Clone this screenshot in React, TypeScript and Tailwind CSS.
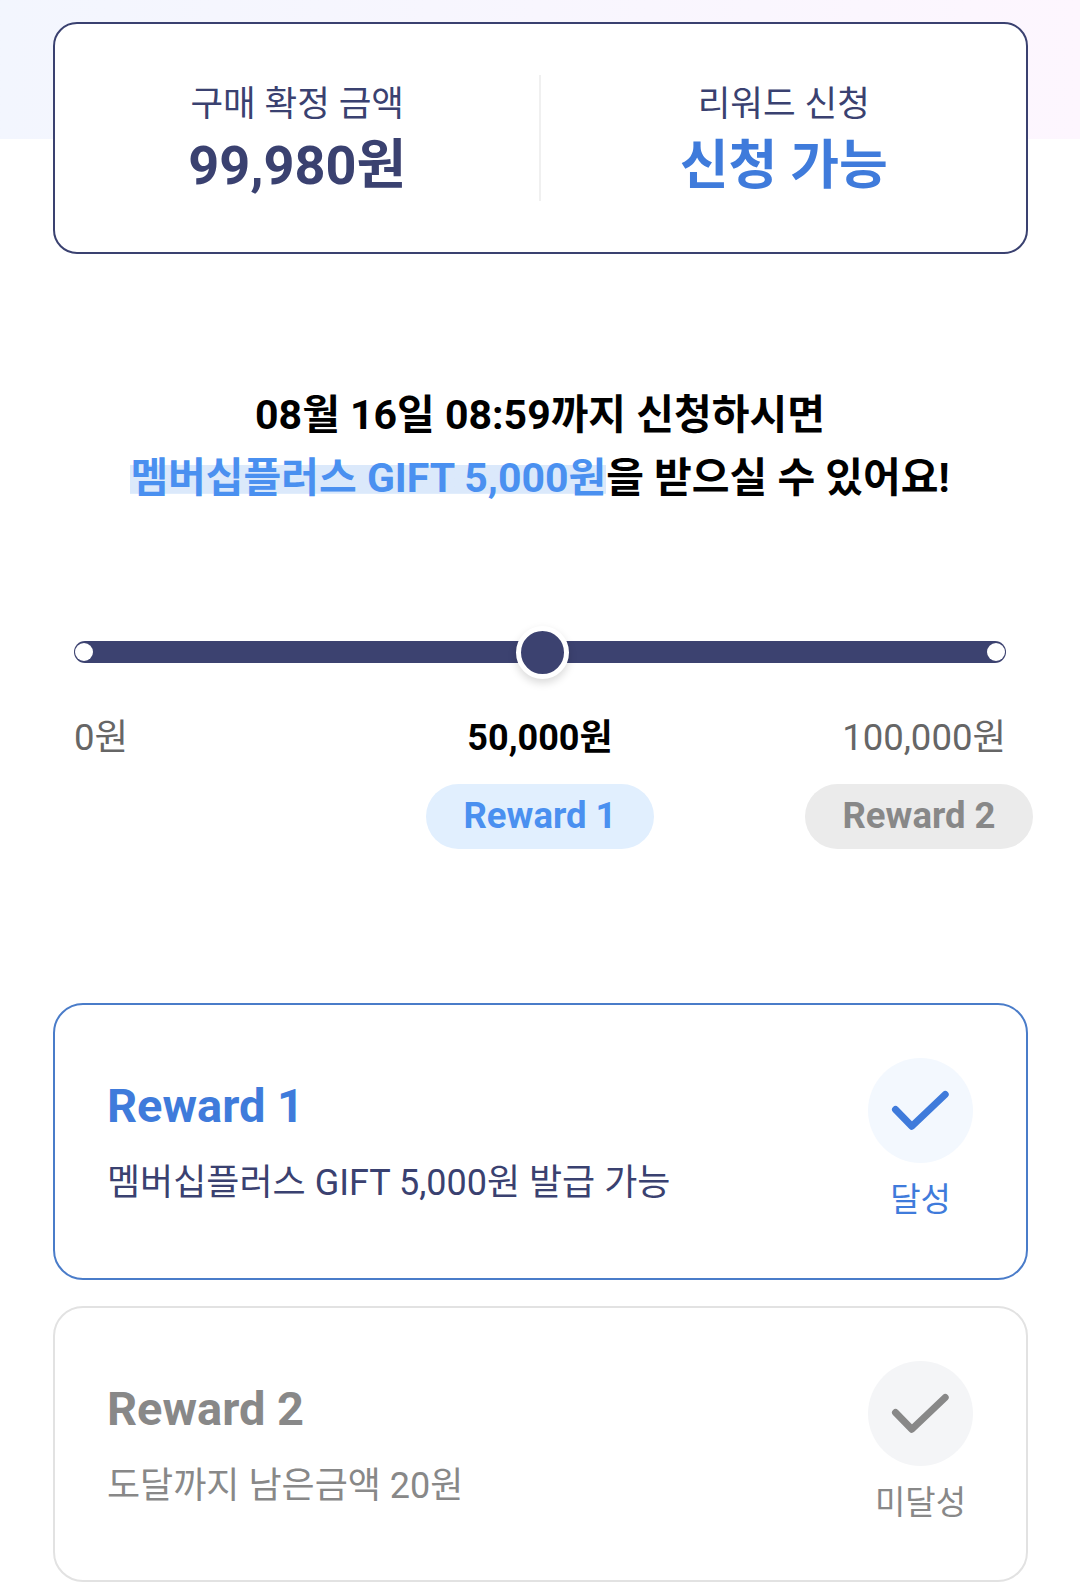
const font = "font-['Roboto','Noto_Sans_CJK_KR',sans-serif]"

function RewardCard({ title, desc, status, active }: { title: string; desc: string; status: string; active: boolean }) {
  return (
    <div
      className={`h-[276.5px] rounded-[30px] border-2 flex items-start justify-between pl-[52px] pr-[53px] ${
        active ? 'border-[#4a7cc9]' : 'border-[#e2e2e2]'
      }`}
    >
      <div className="pt-[73px]">
        <div className={`text-[47px] leading-[56px] font-bold ${active ? 'text-[#3f7bdb]' : 'text-[#888888]'}`}>{title}</div>
        <div className={`mt-[25px] text-[36px] leading-[48px] ${active ? 'text-[#3a4170]' : 'text-[#888888]'}`}>{desc}</div>
      </div>
      <div className="pt-[53px] flex flex-col items-center w-[105px]">
        <div className={`w-[105px] h-[105px] rounded-full ${active ? 'bg-[#f3f8fe] text-[#3f7bdb]' : 'bg-[#f4f5f7] text-[#888888]'}`}>
          <svg viewBox="0 0 105 105" className="w-[105px] h-[105px]" fill="none" stroke="currentColor" strokeWidth="7" strokeLinecap="round" strokeLinejoin="round">
            <path d="M27.5 51.5 43.8 68.2 77.2 36.5" />
          </svg>
        </div>
        <div className={`mt-[15px] whitespace-nowrap text-[33px] leading-[44px] ${active ? 'text-[#3f7bdb]' : 'text-[#888888]'}`}>{status}</div>
      </div>
    </div>
  )
}

export default function App() {
  return (
    <div className={`w-[1080px] h-[1587px] overflow-hidden bg-white ${font}`}>
      {/* Top gradient band */}
      <div className="h-[139px] bg-gradient-to-r from-[#f3f6fe] to-[#fdf6fe]" />

      {/* Summary box */}
      <div className="ml-[53px] mr-[52px] -mt-[117px] h-[232px] rounded-[24px] border-2 border-[#3a4170] bg-white flex items-center">
        <div className="flex-1 flex flex-col items-center pt-[5px]">
          <div className="text-[35.5px] leading-[46px] text-[#3a4170]">구매 확정 금액</div>
          <div className="mt-[4px] text-[54px] leading-[70px] font-bold text-[#3a4170]">99,980원</div>
        </div>
        <div className="w-[2px] h-[126px] -ml-[1px] mr-[1px] bg-[#f0f0f0]" />
        <div className="flex-1 flex flex-col items-center pt-[5px]">
          <div className="text-[35.5px] leading-[46px] text-[#3a4170]">리워드 신청</div>
          <div className="mt-[4px] text-[53px] leading-[70px] font-bold text-[#3f7bdb]">신청 가능</div>
        </div>
      </div>

      {/* Headline */}
      <div className="mt-[130px] text-center text-[41px] leading-[63px] font-bold text-black">
        <div>08월 16일 08:59까지 신청하시면</div>
        <div>
          <span className="text-[#4a90f0] bg-gradient-to-b from-transparent from-[28%] to-[28%] to-[#dbe9fb] bg-no-repeat bg-[length:100%_83%]">멤버십플러스 GIFT 5,000원</span>
          을 받으실 수 있어요!
        </div>
      </div>

      {/* Progress track */}
      <div className="relative mt-[131px] mx-[74px] h-[22px] rounded-full bg-[#3c4270]">
        <div className="absolute left-[1px] top-[2px] w-[18px] h-[18px] rounded-full bg-white" />
        <div className="absolute right-[1px] top-[2px] w-[18px] h-[18px] rounded-full bg-white" />
        <div className="absolute left-[442px] -top-[15px] w-[53px] h-[53px] rounded-full bg-[#3c4270] border-[5px] border-white shadow-[0_4px_8px_rgba(0,0,0,0.15)]" />
      </div>

      {/* Amount labels */}
      <div className="mt-[53px] mx-[74px] grid grid-cols-3 items-center text-[36.5px] leading-[44px] text-[#666666]">
        <span>0원</span>
        <span className="text-center text-[36px] font-bold text-black">50,000원</span>
        <span className="text-right">100,000원</span>
      </div>

      {/* Reward pills */}
      <div className="mt-[24px] pl-[426px] flex gap-[151px]">
        <div className="w-[228px] h-[65px] rounded-full bg-[#e1effe] text-[#4a90f0] text-[36.5px] font-bold flex items-center justify-center">Reward 1</div>
        <div className="w-[228px] h-[65px] rounded-full bg-[#ebebeb] text-[#888888] text-[36.5px] font-bold flex items-center justify-center">Reward 2</div>
      </div>

      {/* Reward cards */}
      <div className="mt-[154px] ml-[53px] mr-[52px] flex flex-col gap-[26px]">
        <RewardCard title="Reward 1" desc="멤버십플러스 GIFT 5,000원 발급 가능" status="달성" active />
        <RewardCard title="Reward 2" desc="도달까지 남은금액 20원" status="미달성" active={false} />
      </div>
    </div>
  )
}
